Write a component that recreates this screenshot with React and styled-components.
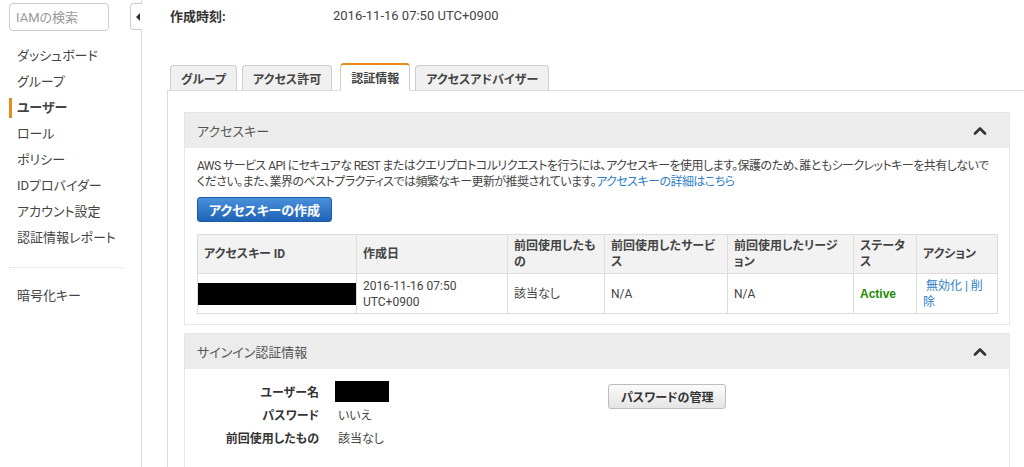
import React from 'react';
import styled, { createGlobalStyle } from 'styled-components';

const Global = createGlobalStyle`
  html, body { margin: 0; padding: 0; background: #fff; }
  body {
    font-family: Roboto, "Noto Sans CJK JP", sans-serif;
    font-size: 12px;
    color: #444;
    font-feature-settings: "palt";
    overflow: hidden;
  }
  * { box-sizing: border-box; }
`;

const Layout = styled.div`
  display: flex;
  height: 467px;
  overflow: hidden;
`;

const Sidebar = styled.aside`
  position: relative;
  width: 142px;
  flex: none;
  border-right: 1px solid #ddd;
  padding: 3px 0 0 9px;
`;

const Search = styled.input`
  width: 100px;
  height: 28px;
  border: 1px solid #ccc;
  border-radius: 4px;
  padding: 0 6px;
  font: 13px Roboto, "Noto Sans CJK JP", sans-serif;
  font-feature-settings: "palt";
  color: #444;
  outline: none;
  &::placeholder { color: #9a9a9a; }
`;

const Handle = styled.div`
  position: absolute;
  top: 3px;
  right: -1px;
  width: 12px;
  height: 27px;
  background: #fff;
  border: 1px solid #ccc;
  border-right: none;
  border-radius: 4px 0 0 4px;
  display: flex;
  align-items: center;
  justify-content: flex-end;
  padding-right: 2px;
  &::after {
    content: '';
    border-style: solid;
    border-width: 4px 4px 4px 0;
    border-color: transparent #333 transparent transparent;
  }
`;

const Nav = styled.nav`
  margin-top: 12px;
  display: flex;
  flex-direction: column;
`;

const NavItem = styled.div`
  position: relative;
  height: 26px;
  line-height: 26px;
  padding-left: 8px;
  font-size: 13px;
  color: #444;
  font-weight: ${p => (p.$active ? 700 : 400)};
  ${p => p.$active && `
    &::before {
      content: '';
      position: absolute;
      left: 0;
      top: 3px;
      width: 3px;
      height: 20px;
      background: #e8891c;
    }
  `}
`;

const NavDivider = styled.div`
  width: 114px;
  border-top: 1px dotted #d6d6d6;
  margin: 16px 0 15px;
`;

const Main = styled.main`
  flex: 1;
  min-width: 0;
  padding-left: 25px;
`;

const MetaRow = styled.div`
  display: flex;
  height: 30px;
  align-items: center;
  padding-left: 3px;
  font-size: 13px;
`;

const MetaLabel = styled.div`
  width: 163px;
  font-weight: 700;
  color: #333;
`;

const MetaValue = styled.div`
  color: #444;
`;

const Tabs = styled.div`
  display: flex;
  align-items: flex-end;
  margin: 33px 0 -1px 3px;
  height: 28px;
  position: relative;
  z-index: 1;
`;

const Tab = styled.div`
  height: ${p => (p.$active ? '28px' : '26px')};
  padding: 0 10px;
  margin: ${p => (p.$active ? '0 5px 0 3px' : '0 5px 0 0')};
  display: flex;
  align-items: center;
  font-size: 12px;
  font-weight: 700;
  color: #444;
  background: ${p => (p.$active ? '#fff' : '#f0f0f0')};
  border: 1px solid #ccc;
  border-top: ${p => (p.$active ? '2px solid #e8891c' : '1px solid #ccc')};
  border-bottom: ${p => (p.$active ? '1px solid #fff' : '1px solid #ddd')};
  border-radius: 4px 4px 0 0;
`;

const Panel = styled.div`
  border-top: 1px solid #ddd;
  border-left: 1px solid #ddd;
  padding: 21px 14px 0 16px;
`;

const Section = styled.section`
  border: 1px solid #e6e6e6;
  margin-bottom: 8px;
`;

const SectionHeader = styled.div`
  height: 35px;
  background: #ececec;
  display: flex;
  align-items: center;
  justify-content: space-between;
  padding: 0 22px 0 12px;
  font-size: 13px;
  color: #555;
`;

const SectionBody = styled.div`
  padding: ${p => p.$pad || '10px 13px 10px 12px'};
`;

const Desc = styled.p`
  margin: 0;
  line-height: 16px;
  font-size: 12px;
  letter-spacing: -0.55px;
  white-space: nowrap;
  color: #444;
`;

const Link = styled.a`
  color: #2f7ec7;
  text-decoration: none;
`;

const PrimaryButton = styled.button`
  display: block;
  margin-top: 7px;
  height: 25px;
  padding: 0 11px;
  border: 1px solid #1b5aa8;
  border-radius: 3px;
  background: linear-gradient(#4a90db, #1f63b5);
  color: #fff;
  font: 700 13px Roboto, "Noto Sans CJK JP", sans-serif;
  font-feature-settings: "palt";
`;

const Table = styled.table`
  margin-top: 12px;
  border-collapse: collapse;
  table-layout: fixed;
  width: 800px;
`;

const Th = styled.th`
  background: #f2f2f2;
  border: 1px solid #dcdcdc;
  padding: 0 6px;
  height: 39px;
  line-height: 16px;
  text-align: left;
  font-weight: 700;
  font-size: 12px;
  color: #444;
`;

const Td = styled.td`
  border: 1px solid #dcdcdc;
  padding: 0 6px;
  height: 40px;
  line-height: 16px;
  font-size: 12px;
  color: #444;
  overflow: visible;
`;

const Redacted = styled.div`
  background: #000;
  height: ${p => p.$h}px;
  width: ${p => p.$w}px;
  margin-left: ${p => p.$ml || 0}px;
`;

const Status = styled.span`
  color: #1e8b00;
  font-weight: 700;
  font-family: "Liberation Sans", Arial, sans-serif;
`;

const Actions = styled.span`
  color: #2f7ec7;
`;

const SigninRow = styled.div`
  display: flex;
  align-items: flex-start;
`;

const InfoGrid = styled.div`
  width: 411px;
  display: grid;
  grid-template-columns: 122px 1fr;
  column-gap: 16px;
  grid-auto-rows: 23px;
  align-items: center;
`;

const InfoLabel = styled.div`
  text-align: right;
  font-weight: 700;
  font-size: 12px;
  color: #333;
`;

const InfoValue = styled.div`
  font-size: 12px;
  color: #444;
  padding-left: ${p => p.$pl || 0}px;
`;

const SecondaryButton = styled.button`
  margin-top: 4px;
  height: 25px;
  padding: 0 12px;
  border: 1px solid #bdbdbd;
  border-radius: 3px;
  background: linear-gradient(#fbfbfb, #e4e4e4);
  color: #333;
  font: 700 12px Roboto, "Noto Sans CJK JP", sans-serif;
  font-feature-settings: "palt";
`;

const Chevron = () => (
  <svg width="14" height="9" viewBox="0 0 14 9">
    <polyline points="2,7.5 7,2.5 12,7.5" fill="none" stroke="#333" strokeWidth="2.6" strokeLinecap="round" strokeLinejoin="round" />
  </svg>
);

const navItems = ['ダッシュボード', 'グループ', 'ユーザー', 'ロール', 'ポリシー', 'IDプロバイダー', 'アカウント設定', '認証情報レポート'];

export default function App() {
  return (
    <>
      <Global />
      <Layout>
        <Sidebar>
          <Search placeholder="IAMの検索" />
          <Handle />
          <Nav>
            {navItems.map(n => (
              <NavItem key={n} $active={n === 'ユーザー'}>{n}</NavItem>
            ))}
            <NavDivider />
            <NavItem>暗号化キー</NavItem>
          </Nav>
        </Sidebar>
        <Main>
          <MetaRow>
            <MetaLabel>作成時刻:</MetaLabel>
            <MetaValue>2016-11-16 07:50 UTC+0900</MetaValue>
          </MetaRow>
          <Tabs>
            <Tab>グループ</Tab>
            <Tab>アクセス許可</Tab>
            <Tab $active>認証情報</Tab>
            <Tab>アクセスアドバイザー</Tab>
          </Tabs>
          <Panel>
            <Section>
              <SectionHeader>
                <span>アクセスキー</span>
                <Chevron />
              </SectionHeader>
              <SectionBody>
                <Desc>
                  AWS サービス API にセキュアな REST またはクエリプロトコルリクエストを行うには、アクセスキーを使用します。保護のため、誰ともシークレットキーを共有しないで<br />
                  ください。また、業界のベストプラクティスでは頻繁なキー更新が推奨されています。<Link href="#">アクセスキーの詳細はこちら</Link>
                </Desc>
                <PrimaryButton>アクセスキーの作成</PrimaryButton>
                <Table>
                  <colgroup>
                    <col style={{ width: 159 }} />
                    <col style={{ width: 151 }} />
                    <col style={{ width: 97 }} />
                    <col style={{ width: 123 }} />
                    <col style={{ width: 126 }} />
                    <col style={{ width: 63 }} />
                    <col style={{ width: 81 }} />
                  </colgroup>
                  <thead>
                    <tr>
                      <Th>アクセスキー ID</Th>
                      <Th>作成日</Th>
                      <Th>前回使用したもの</Th>
                      <Th>前回使用したサービス</Th>
                      <Th>前回使用したリージョン</Th>
                      <Th>ステータス</Th>
                      <Th>アクション</Th>
                    </tr>
                  </thead>
                  <tbody>
                    <tr>
                      <Td><Redacted $w={159} $h={22} $ml={-7} /></Td>
                      <Td>2016-11-16 07:50<br />UTC+0900</Td>
                      <Td>該当なし</Td>
                      <Td>N/A</Td>
                      <Td>N/A</Td>
                      <Td><Status>Active</Status></Td>
                      <Td><Actions>&nbsp;無効化 | 削<br />除</Actions></Td>
                    </tr>
                  </tbody>
                </Table>
              </SectionBody>
            </Section>
            <Section>
              <SectionHeader>
                <span>サインイン認証情報</span>
                <Chevron />
              </SectionHeader>
              <SectionBody $pad="11px 13px 40px 12px">
                <SigninRow>
                  <InfoGrid>
                    <InfoLabel>ユーザー名</InfoLabel>
                    <InfoValue><Redacted $w={54} $h={21} /></InfoValue>
                    <InfoLabel>パスワード</InfoLabel>
                    <InfoValue $pl={3}>いいえ</InfoValue>
                    <InfoLabel>前回使用したもの</InfoLabel>
                    <InfoValue $pl={3}>該当なし</InfoValue>
                  </InfoGrid>
                  <SecondaryButton>パスワードの管理</SecondaryButton>
                </SigninRow>
              </SectionBody>
            </Section>
          </Panel>
        </Main>
      </Layout>
    </>
  );
}
